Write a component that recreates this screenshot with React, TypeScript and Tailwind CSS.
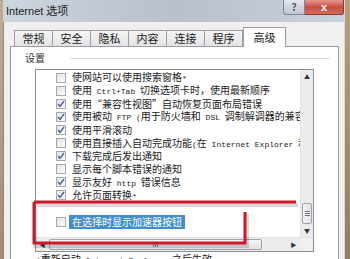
import React from "react";

// settings rows of the 高级 tab
const SettingItems = [
  { label: "使网站可以使用搜索窗格*", checked: false },
  { label: "使用 Ctrl+Tab 切换选项卡时，使用最新顺序", checked: false },
  { label: "使用“兼容性视图”自动恢复页面布局错误", checked: true },
  { label: "使用被动 FTP (用于防火墙和 DSL 调制解调器的兼容性)", checked: true },
  { label: "使用平滑滚动", checked: true },
  { label: "使用直接插入自动完成功能(在 Internet Explorer 和 Windows 资源管理器中)", checked: false },
  { label: "下载完成后发出通知", checked: true },
  { label: "显示每个脚本错误的通知", checked: false },
  { label: "显示友好 http 错误信息", checked: true },
  { label: "允许页面转换*", checked: true },
];

const Tabs = ["常规", "安全", "隐私", "内容", "连接", "程序"];

// latin runs use a narrow mono face, like the bitmap font in the dialog
const Mixed = ({ text }: { text: string }) => {
  const parts = text.split(/([\x20-\x7E]+)/);
  return (
    <>
      {parts.map((p, i) =>
        /^[\x20-\x7E]+$/.test(p) ? (
          <span key={i} className="font-['Liberation_Mono'] text-[8px]">
            {p}
          </span>
        ) : (
          <span key={i}>{p}</span>
        )
      )}
    </>
  );
};

const CheckBox = ({ checked }: { checked: boolean }) => (
  <div className="w-[10px] h-[10px] shrink-0 border border-[#a5a9ae] bg-gradient-to-br from-[#e4e4e4] to-[#fbfbfb] flex items-center justify-center">
    {checked && (
      <svg width="8" height="8" viewBox="0 0 8 8">
        <path d="M1 4 L3 6.3 L7 1" fill="none" stroke="#4b5f9c" strokeWidth="1.4" />
      </svg>
    )}
  </div>
);

const Row = ({ label, checked }: { label: string; checked: boolean }) => (
  <div className="h-[13.1px] shrink-0 flex items-center pl-[20px] gap-[6px] whitespace-nowrap">
    <CheckBox checked={checked} />
    <span className="text-[10px] leading-none text-[#1a1a1a]">
      <Mixed text={label} />
    </span>
  </div>
);

const App = () => {
  return (
    <div
      className="relative w-[350px] h-[259px] overflow-hidden flex bg-[#f0f0f0]"
      style={{ fontFamily: '"Noto Sans CJK SC", "Liberation Sans", sans-serif' }}
    >
      {/* LEFT DESKTOP EDGE */}
      <div className="w-[3px] shrink-0 bg-gradient-to-b from-[#c2ad92] to-[#a88a66]" />

      {/* WINDOW */}
      <div className="w-[341px] shrink-0 flex flex-col">
        {/* TITLE BAR */}
        <div className="h-[22px] shrink-0 flex items-start justify-between bg-gradient-to-r from-[#cdd5df] via-[#b9bfcb] to-[#c9d1dc]">
          <div className="pl-[3px] pt-[5px] text-[11px] leading-none text-[#222] font-['Liberation_Sans']">
            Internet <span style={{ fontFamily: '"Noto Sans CJK SC"' }}>选项</span>
          </div>
          <div className="flex">
            <div className="w-[22px] h-[15px] rounded-bl-[3px] border border-t-0 border-[#7d8796] bg-gradient-to-b from-[#e3e7ee] to-[#bcc5d1] flex items-center justify-center text-[10px] leading-none text-[#4c5466] font-bold">
              ?
            </div>
            <div className="w-[39px] h-[15px] rounded-br-[3px] border border-t-0 border-l-0 border-[#8a3a33] bg-gradient-to-b from-[#e3988c] via-[#c84c3e] to-[#d26c5c] flex items-center justify-center text-[11px] leading-none text-white font-bold font-['Liberation_Sans']">
              x
            </div>
          </div>
        </div>

        {/* BODY */}
        <div className="flex-1 min-h-0 flex flex-col bg-[#f0f0f0] border-l border-[#7f8a99] pl-[6px] pr-[5px] pt-[5px]">
          {/* TABS */}
          <div className="flex items-end h-[19px] shrink-0 pl-[4px]">
            {Tabs.map((t) => (
              <div
                key={t}
                className="w-[39px] h-[16px] -mr-px border border-b-0 border-[#9a9da3] bg-gradient-to-b from-[#f5f5f5] to-[#e3e3e3] flex items-center justify-center text-[11px] leading-none text-[#1a1a1a]"
              >
                {t}
              </div>
            ))}
            <div className="relative z-10 w-[43px] h-[20px] -mb-px ml-[1px] border border-b-0 border-[#9a9da3] bg-white flex items-center justify-center text-[11px] leading-none text-[#1a1a1a]">
              高级
            </div>
          </div>

          {/* TAB PANEL */}
          <div className="flex-1 flex flex-col bg-white border border-[#9a9da3] pl-[14px]">
            <div className="h-[22px] shrink-0 w-[305px] flex items-center">
              <span className="text-[10px] leading-none text-[#333]">设置</span>
              <div className="flex-1 ml-[25px] h-px bg-[#d9dde2]" />
            </div>

            {/* LIST BOX */}
            <div className="ml-[10px] w-[279px] h-[183px] shrink-0 border border-[#8c9096] flex flex-col bg-white">
              <div className="flex-1 flex min-h-0">
                <div className="flex-1 min-w-0 overflow-hidden flex flex-col pt-[1px]">
                  {SettingItems.map((item, i) => (
                    <Row key={i} label={item.label} checked={item.checked} />
                  ))}
                  <div className="h-[13.1px] shrink-0" />
                  <div className="h-[13.1px] shrink-0 flex items-center pl-[20px] gap-[3px] whitespace-nowrap">
                    <CheckBox checked={false} />
                    <span className="bg-[#3f8ed0] text-white text-[10px] leading-none px-[3px] py-[2px]">
                      在选择时显示加速器按钮
                    </span>
                  </div>
                </div>
                {/* VERTICAL SCROLLBAR */}
                <div className="w-[13px] shrink-0 flex flex-col bg-[#ececec] border-l border-[#e2e2e2]">
                  <div className="h-[13px] flex items-center justify-center text-[6px] text-[#333]">▲</div>
                  <div className="flex-1" />
                  <div className="h-[21px] mx-[1px] rounded-[2px] border border-[#9ea4ac] bg-gradient-to-r from-[#f3f4f6] to-[#dde0e5] flex items-center justify-center">
                    <div className="flex flex-col gap-[1px]">
                      <div className="w-[5px] h-px bg-[#777]" />
                      <div className="w-[5px] h-px bg-[#777]" />
                      <div className="w-[5px] h-px bg-[#777]" />
                    </div>
                  </div>
                  <div className="h-[13px] flex items-center justify-center text-[6px] text-[#333]">▼</div>
                </div>
              </div>
              {/* HORIZONTAL SCROLLBAR */}
              <div className="h-[14px] shrink-0 flex bg-[#ececec] border-t border-[#e2e2e2]">
                <div className="w-[13px] flex items-center justify-center text-[6px] text-[#333]">◀</div>
                <div className="w-[213px] my-[1px] rounded-[2px] border border-[#9ea4ac] bg-gradient-to-b from-[#f3f4f6] to-[#dde0e5] flex items-center justify-center gap-[1px]">
                  <div className="w-px h-[5px] bg-[#777]" />
                  <div className="w-px h-[5px] bg-[#777]" />
                  <div className="w-px h-[5px] bg-[#777]" />
                </div>
                <div className="flex-1" />
                <div className="w-[13px] flex items-center justify-center text-[6px] text-[#333]">▶</div>
                <div className="w-[13px] bg-[#f0f0f0]" />
              </div>
            </div>

            <div className="ml-[11px] mt-[2px] whitespace-nowrap text-[10px] leading-none text-[#1a1a1a]">
              <Mixed text="*重新启动 Internet Explorer 之后生效" />
            </div>
          </div>
        </div>
      </div>

      {/* RIGHT DESKTOP EDGE */}
      <div className="w-[6px] shrink-0 border-l border-[#d8d8d8] bg-gradient-to-b from-[#b99c78] to-[#9c7b57]" />

      {/* RED ANNOTATION BOX */}
      <svg className="absolute left-0 top-0 pointer-events-none" width="350" height="259">
        <path d="M34 203 H297 M34 202 V244 H246 V212" fill="none" stroke="#000" strokeOpacity="0.15" strokeWidth="4" transform="translate(1,2)" />
        <path d="M34 202 H296 M34 202 V243 H245 V212" fill="none" stroke="#cc1a2c" strokeWidth="3" />
      </svg>
    </div>
  );
};

export default App;
